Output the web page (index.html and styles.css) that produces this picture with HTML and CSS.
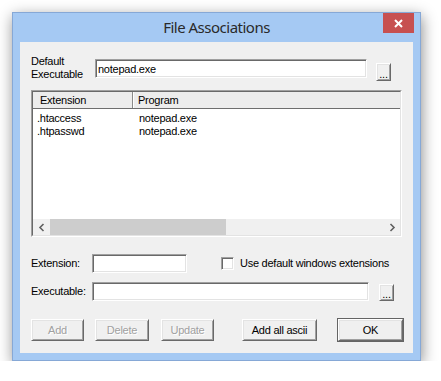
FILE: index.html
```html
<!DOCTYPE html>
<html lang="en">
<head>
    <meta charset="UTF-8">
    <title>File Associations</title>
    <link rel="stylesheet" href="styles.css">
</head>
<body>
<div class="window">
    <div class="titlebar">
        <span></span>
        <div class="title">File Associations</div>
        <button class="close-btn" title="Close">
            <svg width="9" height="9" viewBox="0 0 9 9"><path d="M1 1L8 8M8 1L1 8" stroke="#fff" stroke-width="2"/></svg>
        </button>
    </div>
    <div class="client">
        <div class="row row-default">
            <label class="lbl lbl-default">Default<br>Executable</label>
            <input class="field field-default" type="text" value="notepad.exe">
            <button class="btn btn-browse">...</button>
        </div>

        <div class="list">
            <div class="list-inner">
                <div class="list-head">
                    <div class="col col-ext">Extension</div>
                    <div class="col col-prog">Program</div>
                </div>
                <div class="list-body">
                    <div class="list-row"><span class="cell-ext">.htaccess</span><span>notepad.exe</span></div>
                    <div class="list-row"><span class="cell-ext">.htpasswd</span><span>notepad.exe</span></div>
                </div>
                <div class="hscroll">
                    <span class="arrow">
                        <svg width="8" height="9" viewBox="0 0 8 9"><path d="M5.5 1L2 4.5L5.5 8" fill="none" stroke="#606060" stroke-width="1.6"/></svg>
                    </span>
                    <div class="track"><div class="thumb"></div></div>
                    <span class="arrow">
                        <svg width="8" height="9" viewBox="0 0 8 9"><path d="M2.5 1L6 4.5L2.5 8" fill="none" stroke="#606060" stroke-width="1.6"/></svg>
                    </span>
                </div>
            </div>
        </div>

        <div class="row row-ext">
            <label class="lbl">Extension:</label>
            <input class="field field-ext" type="text">
            <label class="check">
                <span class="check-box"></span>
                <span>Use default windows extensions</span>
            </label>
        </div>

        <div class="row row-exe">
            <label class="lbl">Executable:</label>
            <input class="field field-exe" type="text">
            <button class="btn btn-browse btn-browse-sm">...</button>
        </div>

        <div class="row row-buttons">
            <button class="btn btn-add" disabled>Add</button>
            <button class="btn btn-delete" disabled>Delete</button>
            <button class="btn btn-update" disabled>Update</button>
            <button class="btn btn-ascii">Add all ascii</button>
            <button class="btn btn-ok">OK</button>
        </div>
    </div>
</div>
</body>
</html>
```

FILE: styles.css
```css
body { margin: 0; background: #fff; font-family: 'Liberation Sans', Arial, sans-serif; }

.window {
    box-sizing: border-box;
    width: 409px; height: 349px;
    margin: 12px 0 0 12px;
    background: #a5c9f3;
    border: 1px solid #86a8d6;
    box-shadow: 1px 4px 14px rgba(0, 0, 0, 0.45);
    display: flex; flex-direction: column;
}

/* title bar */
.titlebar {
    height: 29px;
    display: grid;
    grid-template-columns: 1fr auto 1fr;
}
.title {
    margin-top: 4px;
    font-family: 'Noto Sans', sans-serif;
    font-size: 15px; line-height: 20px;
    letter-spacing: -0.5px;
    color: #2a2a2a;
}
.close-btn {
    justify-self: end;
    width: 31px; height: 20px;
    margin-right: 6px;
    padding: 0; border: none;
    background: #c75050;
    display: flex; align-items: center; justify-content: center;
}

/* dialog body */
.client {
    flex: 1;
    margin: 0 7px 7px 7px;
    background: #f0f0f0;
    padding: 13px 0 0 11px;
    font-size: 11px; line-height: 13px;
    letter-spacing: -0.25px;
    color: #000;
}
.row { display: flex; align-items: center; }
.lbl { width: 61px; flex: none; }

.field {
    box-sizing: border-box;
    height: 19px; margin: 0; padding: 0 2px;
    font: inherit; letter-spacing: inherit;
    background: #fff;
    border: 1px solid;
    border-color: #a0a0a0 #fff #fff #a0a0a0;
    box-shadow: inset 1px 1px #696969, inset -1px -1px #e3e3e3;
    outline: none;
}

.btn {
    box-sizing: border-box;
    margin: 0; padding: 0;
    font: inherit; letter-spacing: inherit; color: #000;
    background: #f0f0f0;
    border: 1px solid;
    border-color: #fff #696969 #696969 #fff;
    box-shadow: inset 1px 1px #e3e3e3, inset -1px -1px #a0a0a0;
}
.btn:disabled { color: #a0a0a0; text-shadow: 1px 1px #fff; }

.row-default { height: 35px; align-items: flex-start; }
.lbl-default { width: 64px; }
.field-default { width: 272px; margin-top: 4px; }
.btn-browse {
    width: 15px; height: 18px;
    margin: 8px 0 0 9px;
    line-height: 20px;
}

/* list view */
.list {
    box-sizing: border-box;
    width: 371px; height: 147px;
    border: 1px solid;
    border-color: #a0a0a0 #fff #fff #a0a0a0;
}
.list-inner {
    box-sizing: border-box;
    height: 100%;
    border: 1px solid;
    border-color: #696969 #e3e3e3 #e3e3e3 #696969;
    background: #fff;
    display: flex; flex-direction: column;
}
.list-head {
    display: flex;
    height: 17px;
    background: #ececec;
    border-bottom: 1px solid #6d6d6d;
    box-sizing: border-box;
    line-height: 16px;
}
.col { box-sizing: border-box; }
.col-ext {
    width: 100px; padding-left: 7px;
    border-right: 1px solid #8a8a8a;
    box-shadow: 1px 0 #fff;
}
.col-prog { padding-left: 5px; }
.list-body { flex: 1; padding: 3px 0 0 4px; }
.list-row { display: flex; }
.cell-ext { width: 102px; }

.hscroll { display: flex; height: 16px; background: #f0f0f0; }
.arrow { width: 17px; display: flex; align-items: center; justify-content: center; }
.track { flex: 1; }
.thumb { width: 176px; height: 100%; background: #cdcdcd; }

/* options rows */
.row-ext { margin-top: 17px; }
.field-ext { width: 95px; }
.check { display: flex; align-items: center; margin-left: 34px; }
.check-box {
    box-sizing: border-box;
    width: 13px; height: 13px;
    margin-right: 6px;
    background: #fff;
    border: 1px solid;
    border-color: #a0a0a0 #fff #fff #a0a0a0;
    box-shadow: inset 1px 1px #696969, inset -1px -1px #e3e3e3;
}

.row-exe { margin-top: 9px; align-items: flex-end; }
.row-exe .lbl { align-self: center; }
.field-exe { width: 277px; }
.btn-browse-sm { height: 17px; margin: 0 0 0 10px; line-height: 18px; }

/* bottom buttons */
.row-buttons { margin-top: 18px; }
.row-buttons .btn { height: 22px; }
.btn-add { width: 53px; }
.btn-delete { width: 54px; margin-left: 11px; }
.btn-update { width: 53px; margin-left: 12px; }
.btn-ascii { width: 75px; margin-left: 28px; }
.btn-ok {
    width: 65px; margin-left: 21px;
    outline: 1px solid #646464; outline-offset: 0;
    border-color: #fff #696969 #696969 #fff;
}
```
